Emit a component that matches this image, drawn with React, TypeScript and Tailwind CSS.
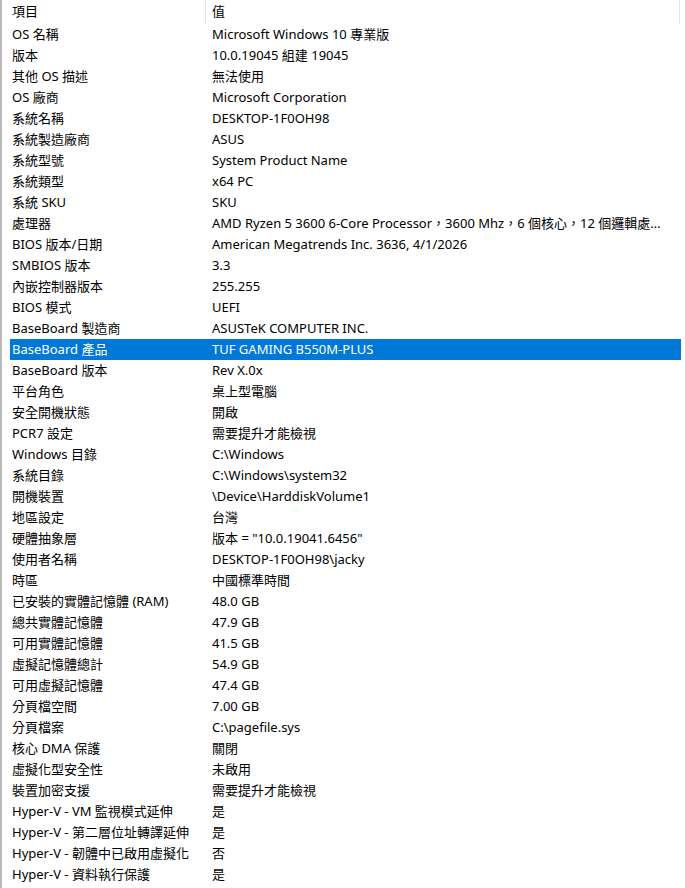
import React from "react";

const rows: [string, string][] = [
  ["OS 名稱", "Microsoft Windows 10 專業版"],
  ["版本", "10.0.19045 組建 19045"],
  ["其他 OS 描述", "無法使用"],
  ["OS 廠商", "Microsoft Corporation"],
  ["系統名稱", "DESKTOP-1F0OH98"],
  ["系統製造廠商", "ASUS"],
  ["系統型號", "System Product Name"],
  ["系統類型", "x64 PC"],
  ["系統 SKU", "SKU"],
  ["處理器", "AMD Ryzen 5 3600 6-Core Processor，3600 Mhz，6 個核心，12 個邏輯處理器"],
  ["BIOS 版本/日期", "American Megatrends Inc. 3636, 4/1/2026"],
  ["SMBIOS 版本", "3.3"],
  ["內嵌控制器版本", "255.255"],
  ["BIOS 模式", "UEFI"],
  ["BaseBoard 製造商", "ASUSTeK COMPUTER INC."],
  ["BaseBoard 產品", "TUF GAMING B550M-PLUS"],
  ["BaseBoard 版本", "Rev X.0x"],
  ["平台角色", "桌上型電腦"],
  ["安全開機狀態", "開啟"],
  ["PCR7 設定", "需要提升才能檢視"],
  ["Windows 目錄", "C:\\Windows"],
  ["系統目錄", "C:\\Windows\\system32"],
  ["開機裝置", "\\Device\\HarddiskVolume1"],
  ["地區設定", "台灣"],
  ["硬體抽象層", "版本 = \"10.0.19041.6456\""],
  ["使用者名稱", "DESKTOP-1F0OH98\\jacky"],
  ["時區", "中國標準時間"],
  ["已安裝的實體記憶體 (RAM)", "48.0 GB"],
  ["總共實體記憶體", "47.9 GB"],
  ["可用實體記憶體", "41.5 GB"],
  ["虛擬記憶體總計", "54.9 GB"],
  ["可用虛擬記憶體", "47.4 GB"],
  ["分頁檔空間", "7.00 GB"],
  ["分頁檔案", "C:\\pagefile.sys"],
  ["核心 DMA 保護", "關閉"],
  ["虛擬化型安全性", "未啟用"],
  ["裝置加密支援", "需要提升才能檢視"],
  ["Hyper-V - VM 監視模式延伸", "是"],
  ["Hyper-V - 第二層位址轉譯延伸", "是"],
  ["Hyper-V - 韌體中已啟用虛擬化", "否"],
  ["Hyper-V - 資料執行保護", "是"],
];

export default function App() {
  return (
    <div
      className="relative w-[685px] h-[888px] bg-white overflow-hidden text-[13px] text-black border-l-2 border-[#b8b8b8]"
      style={{ fontFamily: '"Noto Sans", "Noto Sans CJK TC", sans-serif' }}
    >
      <div className="flex h-[24px] items-center">
        <div className="w-[204px] h-full flex items-center pl-[10px] border-r border-[#e5e5e5]">項目</div>
        <div className="w-[474px] h-full flex items-center pl-[6px] border-r border-[#e5e5e5]">值</div>
      </div>
      {rows.map(([k, v], i) => {
        const sel = i === 15;
        return (
          <div
            key={i}
            className={
              "ml-[8px] w-[671px] h-[21px] flex items-center leading-[21px] " +
              (sel ? "bg-[#0078d7] text-white" : "")
            }
          >
            <div className="w-[196px] pl-[2px] whitespace-nowrap overflow-hidden">{k}</div>
            <div className="w-[463px] pl-[6px] whitespace-nowrap overflow-hidden text-ellipsis">{v}</div>
          </div>
        );
      })}
    </div>
  );
}
